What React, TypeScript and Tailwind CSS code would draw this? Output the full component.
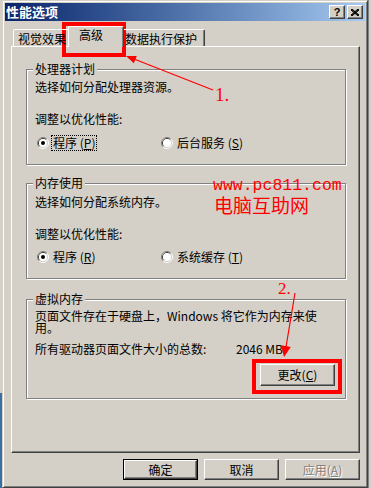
import React from 'react';

const raised =
  'border border-t-white border-l-white border-r-[#404040] border-b-[#404040] shadow-[inset_-1px_-1px_0_#808080]';

const Radio = ({ checked }: { checked?: boolean }) => (
  <svg width="12" height="12" viewBox="0 0 12 12" className="shrink-0">
    <path d="M2.11 9.89 A5.5 5.5 0 0 1 9.89 2.11" fill="none" stroke="#808080" strokeWidth="1" />
    <path d="M9.89 2.11 A5.5 5.5 0 0 1 2.11 9.89" fill="none" stroke="#ffffff" strokeWidth="1" />
    <path d="M2.82 9.18 A4.5 4.5 0 0 1 9.18 2.82" fill="none" stroke="#404040" strokeWidth="1" />
    <path d="M9.18 2.82 A4.5 4.5 0 0 1 2.82 9.18" fill="none" stroke="#d4d0c8" strokeWidth="1" />
    <circle cx="6" cy="6" r="4" fill="#ffffff" />
    {checked && <circle cx="6" cy="6" r="2" fill="#000000" />}
  </svg>
);

const Key = ({ k }: { k: string }) => (
  <span>
    (<span className="underline underline-offset-[1px]">{k}</span>)
  </span>
);

const Button = ({
  children,
  isDefault,
  disabled,
  className = '',
}: {
  children: React.ReactNode;
  isDefault?: boolean;
  disabled?: boolean;
  className?: string;
}) => {
  const inner = (
    <div
      className={`${raised} flex h-full w-full items-center justify-center bg-[#d4d0c8] leading-[14px] ${
        disabled ? 'text-[#808080] [text-shadow:1px_1px_0_#fff]' : ''
      }`}
    >
      {children}
    </div>
  );
  if (isDefault) {
    return <div className={`border border-black ${className}`}>{inner}</div>;
  }
  return <div className={className}>{inner}</div>;
};

const Group = ({
  title,
  className = '',
  children,
}: {
  title: string;
  className?: string;
  children: React.ReactNode;
}) => (
  <div
    className={`relative border border-[#808080] shadow-[1px_1px_0_#fff,inset_1px_1px_0_#fff] ${className}`}
  >
    <span className="absolute left-[6px] top-[-8px] bg-[#d4d0c8] px-[2px] leading-[14px]">{title}</span>
    {children}
  </div>
);

const RadioRow = ({
  left,
  right,
  focus,
  className = '',
}: {
  left: React.ReactNode;
  right: React.ReactNode;
  focus?: boolean;
  className?: string;
}) => (
  <div className={`flex h-[16px] items-center pl-[10px] ${className}`}>
    <div className="flex w-[124px] items-center gap-[3px]">
      <Radio checked />
      <span className={`px-[1px] leading-[14px] ${focus ? 'outline outline-1 outline-dotted outline-black' : ''}`}>
        {left}
      </span>
    </div>
    <div className="flex items-center gap-[4px]">
      <Radio />
      <span className="leading-[14px]">{right}</span>
    </div>
  </div>
);

export default function App() {
  return (
    <div className="relative flex h-[488px] w-[371px] overflow-hidden bg-[#d4d0c8] font-['Noto_Sans_CJK_SC',sans-serif] text-[12px] text-black">
      {/* desktop strip on the left */}
      <div className="flex h-full w-[2px] flex-col">
        <div className="flex-1 bg-[#d4d0c8]" />
        <div className="h-[95px] bg-[#3a6ea5]" />
      </div>

      {/* dialog window */}
      <div className="flex h-[488px] w-[366px] flex-col border border-[#d4d0c8] border-r-[#404040] border-b-[#404040] p-[2px] shadow-[inset_1px_1px_0_#fff,inset_-1px_-1px_0_#808080]">
        {/* title bar */}
        <div className="flex h-[18px] items-center bg-gradient-to-r from-[#0a246a] to-[#a6caf0] pl-[1px] pr-[2px]">
          <span className="flex-1 text-[13px] font-bold leading-[16px] text-white">性能选项</span>
          <div className={`${raised} mr-[2px] flex h-[14px] w-[16px] items-center justify-center bg-[#d4d0c8] font-['Liberation_Sans',sans-serif] text-[11px] font-bold leading-none`}>
            ?
          </div>
          <div className={`${raised} flex h-[14px] w-[16px] items-center justify-center bg-[#d4d0c8]`}>
            <svg width="8" height="7" viewBox="0 0 8 7">
              <path d="M0 0 L8 7 M1 0 L8 6 M0 1 L7 7 M8 0 L0 7 M7 0 L0 6 M8 1 L1 7" stroke="#000" strokeWidth="1" fill="none" />
            </svg>
          </div>
        </div>

        {/* tabs */}
        <div className="relative z-10 -mb-px mt-[5px] flex h-[21px] items-end pl-[8px]">
          <div className="mb-px h-[17px] w-[55px] rounded-tl-[2px] border-l border-t border-white pl-[4px] pt-[2px] leading-[14px]">
            视觉效果
          </div>
          <div className="h-[21px] w-[56px] rounded-t-[2px] border-l border-r border-t border-l-white border-t-white border-r-[#404040] bg-[#d4d0c8] pl-[10px] pt-[1px] leading-[14px] shadow-[inset_-1px_0_0_#808080]">
            高级
          </div>
          <div className="mb-px h-[17px] w-[81px] rounded-tr-[2px] border-r border-t border-r-[#404040] border-t-white pl-[1px] pt-[2px] leading-[14px] shadow-[inset_-1px_0_0_#808080]">
            数据执行保护
          </div>
        </div>

        {/* tab panel */}
        <div className={`${raised} ml-[6px] h-[407px] w-[349px] pl-[14px]`}>
          <Group title="处理器计划" className="mt-[22px] h-[96px] w-[320px]">
            <div className="mt-[10px] h-[14px] pl-[8px] leading-[14px]">选择如何分配处理器资源。</div>
            <div className="mt-[18px] h-[14px] pl-[8px] leading-[14px]">调整以优化性能:</div>
            <RadioRow
              className="mt-[9px]"
              focus
              left={
                <>
                  程序 <Key k="P" />
                </>
              }
              right={
                <>
                  后台服务 <Key k="S" />
                </>
              }
            />
          </Group>

          <Group title="内存使用" className="mt-[18px] h-[96px] w-[320px]">
            <div className="mt-[11px] h-[14px] pl-[8px] leading-[14px]">选择如何分配系统内存。</div>
            <div className="mt-[18px] h-[14px] pl-[8px] leading-[14px]">调整以优化性能:</div>
            <RadioRow
              className="mt-[8px]"
              left={
                <>
                  程序 <Key k="R" />
                </>
              }
              right={
                <>
                  系统缓存 <Key k="T" />
                </>
              }
            />
          </Group>

          <Group title="虚拟内存" className="mt-[20px] h-[100px] w-[320px]">
            <div className="mt-[10px] h-[12px] whitespace-nowrap pl-[8px] leading-[12px]">
              页面文件存在于硬盘上，Windows 将它作为内存来使
            </div>
            <div className="h-[12px] pl-[8px] leading-[12px]">用。</div>
            <div className="mt-[8px] flex h-[14px] pl-[8px] leading-[14px]">
              <span className="w-[201px]">所有驱动器页面文件大小的总数:</span>
              <span>2046 MB</span>
            </div>
            <div className="mt-[8px] flex justify-end pr-[10px]">
              <Button className="h-[22px] w-[75px]">
                更改 <Key k="C" />
              </Button>
            </div>
          </Group>
        </div>

        {/* dialog buttons */}
        <div className="ml-[6px] mt-[6px] flex w-[349px] justify-end gap-[6px]">
          <Button isDefault className="h-[21px] w-[75px]">
            确定
          </Button>
          <Button className="h-[21px] w-[75px]">取消</Button>
          <Button disabled className="h-[21px] w-[75px]">
            应用 <Key k="A" />
          </Button>
        </div>
      </div>

      {/* right strip */}
      <div className="flex-1 border-l border-[#808080]" />

      {/* red annotations drawn over the screenshot */}
      <svg className="pointer-events-none absolute left-0 top-0" width="371" height="488" viewBox="0 0 371 488">
        <rect x="64" y="24" width="60" height="31" fill="none" stroke="#ff0000" strokeWidth="4" />
        <line x1="213" y1="90" x2="134" y2="59" stroke="#ff0000" strokeWidth="1.2" />
        <polygon points="126,56 136.8,55.9 133.8,63.3" fill="#ff0000" />
        <text x="215" y="101" fill="#ff0000" fontSize="19" fontFamily="Liberation Serif, serif">
          1.
        </text>

        <text x="213" y="190" fill="#ff0000" fontSize="16.5" fontFamily="Liberation Mono, monospace">
          www.pc811.com
        </text>
        <text x="214" y="213" fill="#ff0000" fontSize="19" fontFamily="Noto Sans CJK SC, sans-serif">
          电脑互助网
        </text>

        <text x="278" y="294" fill="#ff0000" fontSize="17" fontFamily="Liberation Serif, serif">
          2.
        </text>
        <line x1="295" y1="293" x2="286" y2="347" stroke="#ff0000" strokeWidth="1.2" />
        <polygon points="284,357 290.8,347 281,345.3" fill="#ff0000" />
        <rect x="254" y="361" width="86" height="31" fill="none" stroke="#ff0000" strokeWidth="4" />
      </svg>
    </div>
  );
}
